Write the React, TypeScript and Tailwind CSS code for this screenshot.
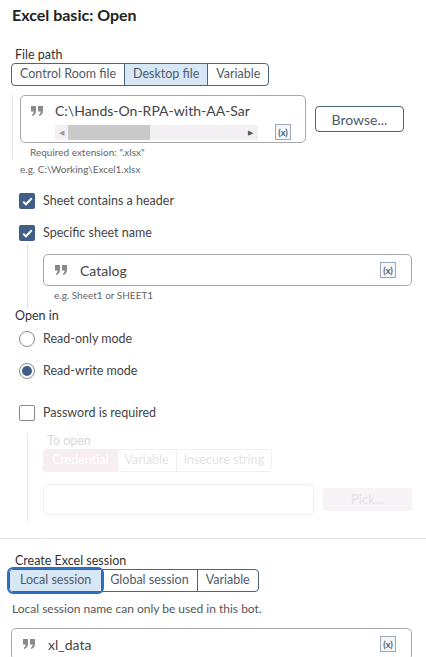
import React from "react";

function QuoteIcon() {
  return (
    <svg width="12" height="10" viewBox="0 0 12 10" className="shrink-0">
      <path d="M0 0h5v5C5 7.6 3.6 9.3 1.2 10L0.8 8.7C2 8.2 2.6 7.3 2.6 5.6H0z" fill="#8a8a8a" />
      <path d="M7 0h5v5C12 7.6 10.6 9.3 8.2 10L7.8 8.7C9 8.2 9.6 7.3 9.6 5.6H7z" fill="#8a8a8a" />
    </svg>
  );
}

function VarIcon() {
  return (
    <div className="flex h-[16px] w-[16px] shrink-0 items-center justify-center border border-[#9aaabb] bg-[#f4f6f8] text-[9px] font-bold leading-none text-[#4a5f7a]">
      (x)
    </div>
  );
}

function Checkbox({ checked }: { checked: boolean }) {
  return checked ? (
    <div className="flex h-[16px] w-[16px] shrink-0 items-center justify-center rounded-[2px] bg-[#415f86]">
      <svg width="11" height="9" viewBox="0 0 11 9">
        <path d="M1.2 4.6l2.8 2.7L9.8 1.3" stroke="white" strokeWidth="2" fill="none" />
      </svg>
    </div>
  ) : (
    <div className="h-[16px] w-[16px] shrink-0 rounded-[2px] border border-[#8a8a8a] bg-white" />
  );
}

function Radio({ checked }: { checked: boolean }) {
  return (
    <div className="flex h-[16px] w-[16px] shrink-0 items-center justify-center rounded-full border border-[#8a8a8a] bg-white">
      {checked ? <div className="h-[10px] w-[10px] rounded-full bg-[#415f86]" /> : null}
    </div>
  );
}

function Segmented({ items, active, focus }: { items: string[]; active: number; focus?: boolean }) {
  return (
    <div className="flex h-[23px] w-fit rounded-[4px] border border-[#4b6281]">
      {items.map((item, i) => (
        <div
          key={item}
          className={
            "flex items-center px-[8px] text-[12.5px] text-[#4e5b6b] " +
            (i > 0 ? "border-l border-[#4b6281] " : "") +
            (i === active ? "bg-[#d7e7f5] " : "") +
            (i === 0 ? "rounded-l-[3px] " : "") +
            (i === active && focus ? "outline-2 outline-offset-[1px] outline-[#2f6fc2] rounded-[3px] px-[10px]" : "")
          }
        >
          {item}
        </div>
      ))}
    </div>
  );
}

function Row({ children, className }: { children: React.ReactNode; className: string }) {
  return (
    <div className={"flex h-[20px] items-center gap-[8px] pl-[19px] text-[12.5px] leading-[20px] text-[#444] " + className}>
      {children}
    </div>
  );
}

export default function App() {
  return (
    <div className="h-[657px] w-[426px] overflow-hidden bg-white font-['Lato','Open_Sans',sans-serif] text-[#333]">
      <div className="pl-[12px] pt-[5px] text-[16px] font-bold leading-[20px] text-[#222]">Excel basic: Open</div>

      <div className="mt-[22px] pl-[15px] text-[12.5px] leading-[16px]">File path</div>
      <div className="pl-[11px]">
        <Segmented items={["Control Room file", "Desktop file", "Variable"]} active={1} />
      </div>

      <div className="ml-[12px] mt-[9px] border-l border-[#e2e2e2] pl-[7px]">
        <div className="flex items-start">
          <div className="h-[48px] w-[286px] rounded-[5px] border border-[#a8a8a8] pl-[10px] pr-[14px]">
            <div className="flex items-center gap-[12px] pt-[6px]">
              <QuoteIcon />
              <span className="whitespace-nowrap text-[14px] leading-[18px] text-[#444]">C:\Hands-On-RPA-with-AA-Sar</span>
            </div>
            <div className="mt-[4px] flex items-center">
              <div className="ml-[24px] flex h-[15px] w-[203px] items-center bg-[#f3f0f3]">
                <span className="ml-[4px] text-[7px] leading-none text-[#999]">◀</span>
                <div className="ml-[4px] h-[15px] w-[82px] bg-[#c9c9c9]" />
                <span className="ml-auto mr-[5px] text-[7px] leading-none text-[#555]">▶</span>
              </div>
              <div className="ml-auto">
                <VarIcon />
              </div>
            </div>
          </div>
          <div className="ml-[9px] mt-[11px] flex h-[26px] w-[89px] items-center justify-center rounded-[4px] border border-[#4b6281] text-[14px] text-[#4e5b6b]">
            Browse...
          </div>
        </div>
        <div className="pl-[10px] pt-[2px] text-[10px] leading-[14px] text-[#666]">Required extension: ".xlsx"</div>
      </div>
      <div className="pl-[20px] pt-[3px] text-[10px] leading-[14px] text-[#666]">e.g. C:\Working\Excel1.xlsx</div>

      <Row className="mt-[15px]">
        <Checkbox checked />
        <span>Sheet contains a header</span>
      </Row>
      <Row className="mt-[12px]">
        <Checkbox checked />
        <span>Specific sheet name</span>
      </Row>

      <div className="ml-[27px] mt-[1px] border-l border-[#e2e2e2] pb-[6px] pl-[15px] pt-[10px]">
        <div className="flex h-[32px] w-[369px] items-center rounded-[5px] border border-[#a8a8a8] pl-[11px] pr-[15px]">
          <QuoteIcon />
          <span className="ml-[13px] text-[14px] text-[#444]">Catalog</span>
          <div className="ml-auto">
            <VarIcon />
          </div>
        </div>
        <div className="pl-[11px] pt-[2px] text-[10px] leading-[14px] text-[#666]">e.g. Sheet1 or SHEET1</div>
      </div>

      <div className="pl-[15px] text-[12.5px] leading-[16px]">Open in</div>
      <Row className="mt-[5px]">
        <Radio checked={false} />
        <span>Read-only mode</span>
      </Row>
      <Row className="mt-[12px]">
        <Radio checked />
        <span>Read-write mode</span>
      </Row>
      <Row className="mt-[22px]">
        <Checkbox checked={false} />
        <span>Password is required</span>
      </Row>

      <div className="ml-[27px] mt-[10px] h-[88px] border-l border-[#e8e8e8] pl-[15px]">
        <div className="pl-[4px] text-[12.5px] leading-[16px] text-[#d8d8d8]">To open</div>
        <div className="flex h-[23px] w-fit rounded-[3px] border border-[#f0f0f0] text-[12.5px] text-[#e4e4e4]">
          <div className="flex items-center rounded-l-[3px] bg-[#f7eef2] px-[8px] text-white">Credential</div>
          <div className="flex items-center border-l border-[#f0f0f0] px-[7px]">Variable</div>
          <div className="flex items-center border-l border-[#f0f0f0] px-[7px]">Insecure string</div>
        </div>
        <div className="mt-[12px] flex items-center">
          <div className="h-[31px] w-[271px] rounded-[4px] border border-[#f0f0f0]" />
          <div className="ml-[9px] flex h-[23px] w-[89px] items-center justify-center rounded-[3px] bg-[#f8f3f6] text-[13px] text-[#e8e0e4]">
            Pick...
          </div>
        </div>
      </div>

      <div className="mt-[17px] border-t border-[#e6e6e6]" />

      <div className="mt-[14px] pl-[15px] text-[12.5px] leading-[16px]">Create Excel session</div>
      <div className="pl-[9px]">
        <Segmented items={["Local session", "Global session", "Variable"]} active={0} focus />
      </div>
      <div className="pl-[12px] pt-[9px] text-[12px] leading-[16px] text-[#555]">
        Local session name can only be used in this bot.
      </div>
      <div className="ml-[11px] mt-[11px] flex h-[32px] w-[401px] items-center rounded-[5px] border border-[#a8a8a8] pl-[11px] pr-[15px]">
        <QuoteIcon />
        <span className="ml-[13px] text-[14px] text-[#444]">xl_data</span>
        <div className="ml-auto">
          <VarIcon />
        </div>
      </div>
    </div>
  );
}
